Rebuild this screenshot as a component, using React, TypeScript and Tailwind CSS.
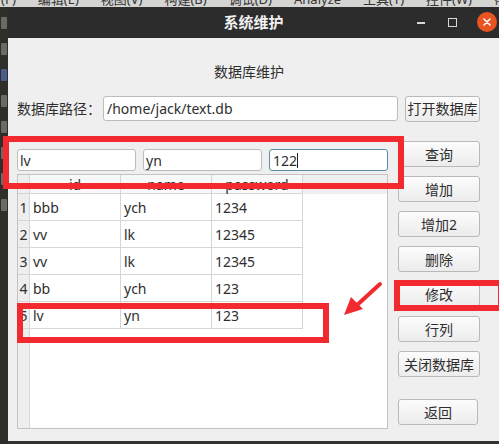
import React from "react";

const font = { fontFamily: '"Noto Sans", "Noto Sans CJK SC", sans-serif' };

const rows = [
  ["1", "bbb", "ych", "1234"],
  ["2", "vv", "lk", "12345"],
  ["3", "vv", "lk", "12345"],
  ["4", "bb", "ych", "123"],
  ["5", "lv", "yn", "123"],
];

const buttons = ["查询", "增加", "增加2", "删除", "修改", "行列", "关闭数据库"];

const Btn = ({ label, w = "w-[82px]" }: { label: string; w?: string }) => (
  <div className={`${w} h-[26px] flex items-center justify-center rounded-[3px] border border-[#b9b9b9] bg-gradient-to-b from-[#fcfcfc] to-[#ececec] text-[14px] text-[#2e2e2e]`}>
    {label}
  </div>
);

const menu = ["(F)", "编辑(E)", "视图(V)", "构建(B)", "调试(D)", "Analyze", "工具(T)", "控件(W)", "帮助(H)"];

export default function App() {
  return (
    <div className="relative w-[499px] h-[444px] overflow-hidden bg-[#34332f] flex flex-col" style={font}>
      {/* background app menu bar, mostly hidden */}
      <div className="h-[7px] bg-[#d4d4d2] overflow-hidden flex gap-[22px] pl-[1px] text-[13px] text-[#333] leading-[14px]">
        {menu.map((m) => (
          <span key={m} className="-mt-[8px] whitespace-nowrap">{m}</span>
        ))}
      </div>
      <div className="flex flex-1">
        <div className="w-[8px] bg-[#2f2e2b] flex flex-col gap-[14px] pt-[10px] items-center">
          {[0, 1, 2, 3, 4, 5, 6, 7].map((i) => (
            <div key={i} className={`w-[6px] h-[12px] rounded-[1px] ${i === 2 ? "bg-[#4a5a8a]" : "bg-[#6b6a66]"}`} />
          ))}
        </div>
        <div className="flex-1 flex flex-col">
          {/* title bar */}
          <div className="relative h-[31px] bg-[#2c2c2c] flex items-center justify-center">
            <span className="text-[15px] font-bold text-[#f2f2f2]">系统维护</span>
            <div className="absolute right-[2px] top-[5px] flex items-center">
              <div className="w-[8px] h-[2px] bg-[#d8d8d8] mr-[23px] mt-[2px]" />
              <div className="w-[9px] h-[9px] border-[1.5px] border-[#d8d8d8] mr-[20px]" />
              <div className="w-[20px] h-[20px] rounded-full bg-[#e95420] flex items-center justify-center">
                <svg width="10" height="10" viewBox="0 0 10 10">
                  <path d="M2 2L8 8M8 2L2 8" stroke="#fff" strokeWidth="1.6" strokeLinecap="round" />
                </svg>
              </div>
            </div>
          </div>
          {/* content */}
          <div className="h-[403px] bg-[#efefef] pl-[9px] pr-[19px] pt-[24px] flex flex-col text-[#2e2e2e]">
            <div className="text-center text-[14px] leading-[20px] pl-[1px]">数据库维护</div>
            <div className="flex items-center mt-[13px] h-[27px]">
              <span className="text-[14px] w-[86px]">数据库路径：</span>
              <div className="flex-1 h-[25px] bg-white border border-[#bcbcbc] rounded-[3px] flex items-center pl-[3px] text-[14px]">
                /home/jack/text.db
              </div>
              <div className="ml-[7px]">
                <Btn label="打开数据库" w="w-[75px]" />
              </div>
            </div>
            <div className="flex mt-[19px] gap-[10px]">
              <div className="w-[371px] flex flex-col mt-[8px]">
                <div className="flex gap-[7px]">
                  <div className="w-[119px] h-[22px] bg-white border border-[#bcbcbc] rounded-[3px] flex items-center pl-[2px] text-[14px]">lv</div>
                  <div className="w-[119px] h-[22px] bg-white border border-[#bcbcbc] rounded-[3px] flex items-center pl-[2px] text-[14px]">yn</div>
                  <div className="w-[119px] h-[22px] bg-white border border-[#5b8ea6] rounded-[3px] flex items-center pl-[3px] text-[14px]">
                    122<span className="w-[1px] h-[15px] bg-[#222]" />
                  </div>
                </div>
                <div className="mt-[3px] h-[255px] border border-[#c3c3c3] bg-white flex">
                  <div className="w-[12px] bg-[#eeeeee] border-r border-[#d6d6d6] flex flex-col">
                    <div className="h-[19px] border-b border-[#d6d6d6]" />
                    {rows.map((r) => (
                      <div key={r[0]} className="h-[27px] border-b border-[#d6d6d6] flex items-center justify-center text-[14px]">
                        {r[0]}
                      </div>
                    ))}
                  </div>
                  <div className="flex-1 flex flex-col">
                    <div className="h-[19px] flex bg-[#efefef]">
                      {["id", "name", "password"].map((h) => (
                        <div key={h} className="w-[91px] h-[19px] bg-[#f8f8f8] border-r border-b border-[#d6d6d6] flex items-end justify-center text-[14px] leading-[17px]">
                          {h}
                        </div>
                      ))}
                    </div>
                    {rows.map((r) => (
                      <div key={r[0]} className="flex">
                        {r.slice(1).map((c, i) => (
                          <div key={i} className="w-[91px] h-[27px] border-r border-b border-[#d6d6d6] flex items-center pl-[3px] text-[14px]">
                            {c}
                          </div>
                        ))}
                      </div>
                    ))}
                  </div>
                </div>
              </div>
              <div className="flex flex-col gap-[9px]">
                {buttons.map((b) => (
                  <Btn key={b} label={b} />
                ))}
                <div className="mt-[13px]">
                  <Btn label="返回" w="w-[80px]" />
                </div>
              </div>
            </div>
          </div>
        </div>
      </div>
      {/* red annotations */}
      <div className="absolute left-[3px] top-[136px] w-[401px] h-[53px] border-[6px] border-[#f2292e]" />
      <div className="absolute left-[17px] top-[303px] w-[312px] h-[40px] border-[6px] border-[#f2292e]" />
      <div className="absolute left-[394px] top-[280px] w-[110px] h-[31px] border-[6px] border-[#f2292e]" />
      <svg className="absolute left-[340px] top-[280px]" width="46" height="40" viewBox="0 0 46 40">
        <path d="M40 4L16 26" stroke="#f2292e" strokeWidth="4" strokeLinecap="round" />
        <path d="M4 35L11 17L23 29Z" fill="#f2292e" />
      </svg>
    </div>
  );
}
